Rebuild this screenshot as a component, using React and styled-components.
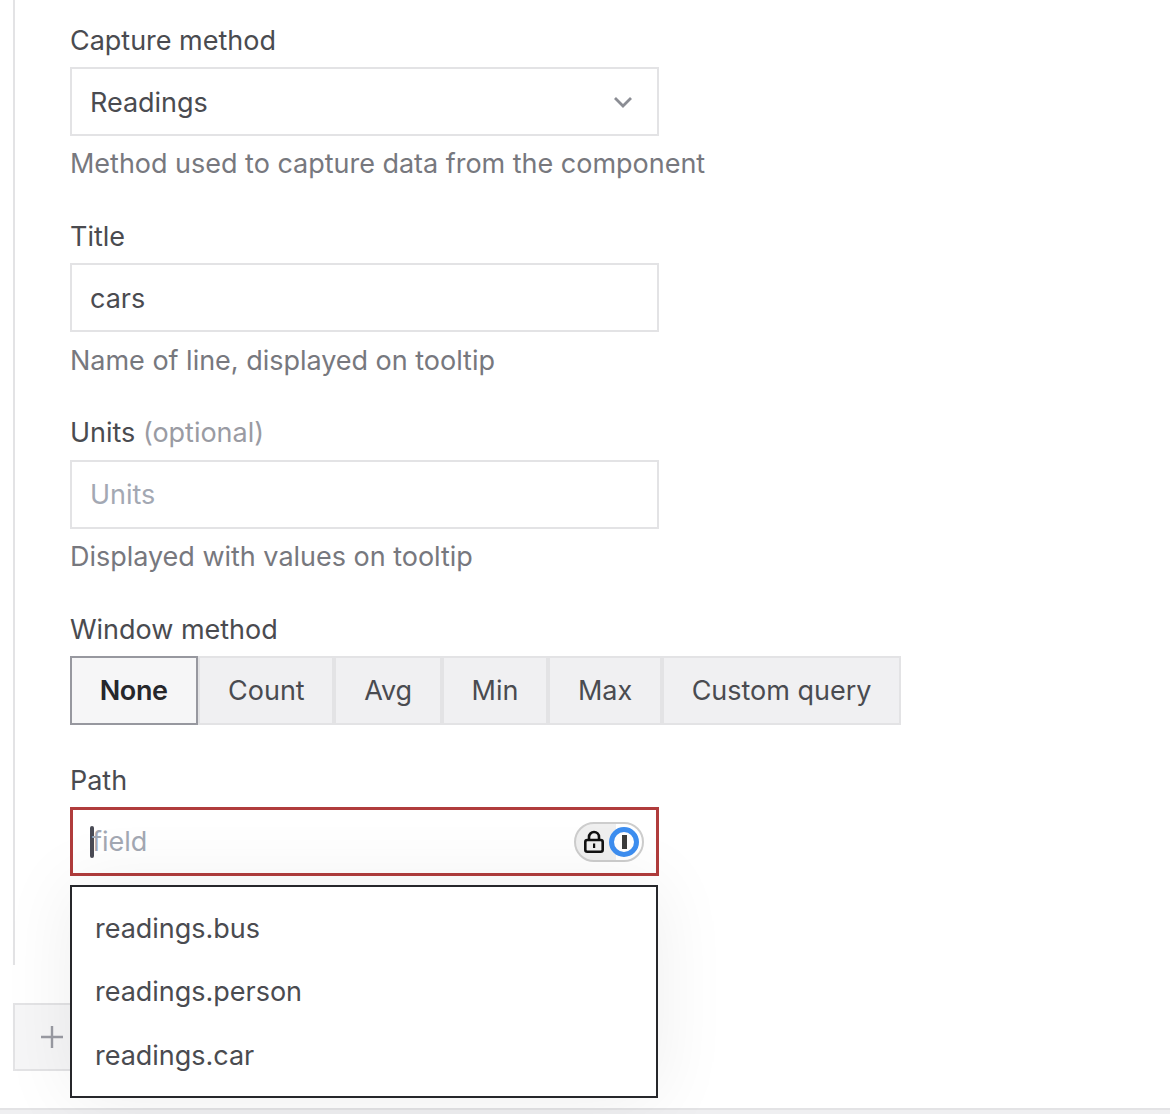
import React from 'react'
import styled, { createGlobalStyle } from 'styled-components'

const GlobalStyle = createGlobalStyle`
    html, body {
        margin: 0;
        padding: 0;
        background: #fff;
    }
    body {
        font-family: "Inter", "Liberation Sans", sans-serif;
        overflow: hidden;
    }
`

const OPTIONS = ['readings.bus', 'readings.person', 'readings.car']
const WINDOWS = ['None', 'Count', 'Avg', 'Min', 'Max', 'Custom query']

function LockBadge() {
    return (
        <Badge>
            <svg width="22" height="24" viewBox="0 0 22 24" fill="none">
                <path d="M6 10V7a5 5 0 0 1 10 0v3" stroke="#111" strokeWidth="2.6" />
                <rect x="2.3" y="10" width="17.4" height="11.7" rx="2" stroke="#111" strokeWidth="2.6" />
                <rect x="10" y="13.5" width="2.2" height="4.5" fill="#111" />
            </svg>
            <BadgeCircle>
                <BadgeBar />
            </BadgeCircle>
        </Badge>
    )
}

function App() {
    return (
        <Page>
            <GlobalStyle />
            <Rail>
                <Field>
                    <Label>Capture method</Label>
                    <Select>
                        <span>Readings</span>
                        <svg width="20" height="12" viewBox="0 0 20 12" fill="none">
                            <path d="M2 1l8 8 8-8" stroke="#8b8d94" strokeWidth="2.8" />
                        </svg>
                    </Select>
                    <Help>Method used to capture data from the component</Help>
                </Field>
                <Field>
                    <Label>Title</Label>
                    <Input>cars</Input>
                    <Help $nudge>Name of line, displayed on tooltip</Help>
                </Field>
                <Field>
                    <Label $gap={9}>Units <Optional>(optional)</Optional></Label>
                    <Input $placeholder>Units</Input>
                    <Help>Displayed with values on tooltip</Help>
                </Field>
                <Field>
                    <Label>Window method</Label>
                    <Segments>
                        {WINDOWS.map((w, i) => (
                            <Segment key={w} $active={i === 0}>{w}</Segment>
                        ))}
                    </Segments>
                </Field>
                <PathField>
                    <Label>Path</Label>
                    <PathInput>
                        <Caret />
                        <PathPlaceholder>field</PathPlaceholder>
                        <LockBadge />
                    </PathInput>
                    <Dropdown>
                        {OPTIONS.map(o => <Option key={o}>{o}</Option>)}
                    </Dropdown>
                </PathField>
            </Rail>
            <AddButton>
                <svg width="24" height="24" viewBox="0 0 24 24" fill="none">
                    <path d="M12 1v22M1 12h22" stroke="#9a9ba3" strokeWidth="2.4" />
                </svg>
            </AddButton>
            <BottomLine />
        </Page>
    )
}

export default App

const Page = styled.div`
    width: 1170px;
    height: 1114px;
    position: relative;
    overflow: hidden;
    color: #4a4b50;
    font-size: 27px;
    letter-spacing: -0.02px;
`
const Rail = styled.div`
    margin-left: 13px;
    height: 965px;
    box-sizing: border-box;
    border-left: 2px solid #e3e3e5;
    padding-left: 55px;
    padding-top: 23px;
`
const Field = styled.div`
    margin-bottom: 37px;
`
const PathField = styled.div`
    position: relative;
    width: 589px;
    padding-top: 1px;
`
const Label = styled.div`
    height: 36px;
    line-height: 36px;
    margin-bottom: ${props => props.$gap || 8}px;
`
const Optional = styled.span`
    color: #9a9ba3;
`
const Input = styled.div`
    width: 589px;
    height: 69px;
    box-sizing: border-box;
    border: 2px solid #e3e3e5;
    padding: ${props => props.$placeholder ? 0 : 2}px 19px 0 18px;
    display: flex;
    align-items: center;
    justify-content: space-between;
    color: ${props => props.$placeholder ? '#a3a8b3' : '#4a4b50'};
`
const Select = styled(Input)`
    padding-right: 24px;
`
const Help = styled.div`
    color: #77787e;
    height: 36px;
    box-sizing: border-box;
    line-height: 36px;
    margin-top: 10px;
    padding-top: ${props => props.$nudge ? 1 : 0}px;
`
const Segments = styled.div`
    display: flex;
    height: 69px;
`
const Segment = styled.div`
    display: flex;
    align-items: center;
    padding: 0 ${props => props.$active ? 28.75 : 27.75}px 0 27.75px;
    box-sizing: border-box;
    background: ${props => props.$active ? '#f6f6f7' : '#f0f0f2'};
    border: 2px solid ${props => props.$active ? '#97989f' : '#e3e3e5'};
    font-weight: ${props => props.$active ? 600 : 400};
    letter-spacing: ${props => props.$active ? '-0.4px' : 'inherit'};
    color: ${props => props.$active ? '#26272b' : '#4a4b50'};
`
const PathInput = styled.div`
    height: 69px;
    box-sizing: border-box;
    border: 3px solid #b03c3c;
    padding: 0 12px 0 17px;
    display: flex;
    align-items: center;
    background: #fff;
`
const Caret = styled.div`
    width: 4px;
    height: 32px;
    border-radius: 2px;
    background: #4a4b55;
`
const PathPlaceholder = styled.span`
    color: #a3a8b3;
    flex: 1;
    margin-left: -2px;
`
const Badge = styled.div`
    width: 70px;
    height: 40px;
    box-sizing: border-box;
    border: 2px solid #cdcdcd;
    border-radius: 20px;
    background: linear-gradient(90deg, #efefef 60%, #fff 60%);
    display: flex;
    align-items: center;
    justify-content: space-between;
    padding: 0 3px 0 7px;
`
const BadgeCircle = styled.div`
    width: 30px;
    height: 30px;
    box-sizing: border-box;
    border: 5px solid #3d8ef0;
    border-radius: 50%;
    background: #fff;
    display: flex;
    align-items: center;
    justify-content: center;
`
const BadgeBar = styled.div`
    width: 5px;
    height: 14px;
    background: #3c3c3c;
`
const Dropdown = styled.div`
    position: absolute;
    top: 123px;
    left: 0;
    width: 588px;
    box-sizing: border-box;
    height: 213px;
    border: 2px solid #26272b;
    background: #fff;
    box-shadow: 0 0 70px rgba(0, 0, 0, 0.07);
    padding: 10px 0 0 23px;
    z-index: 2;
`
const Option = styled.div`
    height: 63.25px;
    line-height: 63.25px;
`
const AddButton = styled.div`
    margin: 38px 0 0 13px;
    width: 100px;
    height: 68px;
    box-sizing: border-box;
    border: 2px solid #e3e3e5;
    background: #f6f6f7;
    display: flex;
    align-items: center;
    padding-left: 25px;
`
const BottomLine = styled.div`
    position: absolute;
    left: 0;
    right: 0;
    bottom: 0;
    height: 6px;
    box-sizing: border-box;
    background: #efeff1;
    border-top: 2px solid #e3e3e5;
`
